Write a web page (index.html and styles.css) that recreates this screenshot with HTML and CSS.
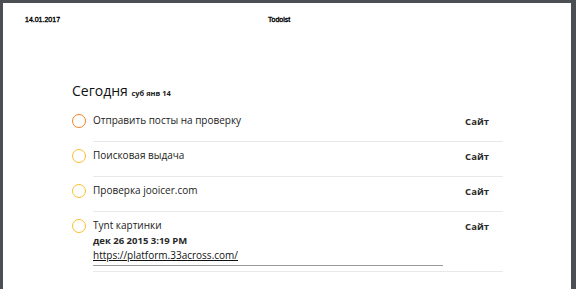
FILE: index.html
```html
<!DOCTYPE html>
<html lang="ru">
<head>
<meta charset="utf-8">
<title>Todoist</title>
<link rel="stylesheet" href="styles.css">
</head>
<body>
<div class="page">
  <header class="print-header">
    <span class="print-date">14.01.2017</span>
    <span class="print-title">Todoist</span>
  </header>
  <main class="content">
    <h1 class="day-title">Сегодня <small class="day-sub">суб янв 14</small></h1>
    <ul class="tasks">
      <li class="task">
        <span class="check check-orange"></span>
        <div class="task-body">
          <div class="task-main"><div class="task-name">Отправить посты на проверку</div></div>
          <span class="task-project">Сайт</span>
        </div>
      </li>
      <li class="task">
        <span class="check check-yellow"></span>
        <div class="task-body">
          <div class="task-main"><div class="task-name">Поисковая выдача</div></div>
          <span class="task-project">Сайт</span>
        </div>
      </li>
      <li class="task">
        <span class="check check-yellow"></span>
        <div class="task-body">
          <div class="task-main"><div class="task-name">Проверка jooicer.com</div></div>
          <span class="task-project">Сайт</span>
        </div>
      </li>
      <li class="task">
        <span class="check check-yellow"></span>
        <div class="task-body task-body-tall">
          <div class="task-main">
            <div class="task-name">Tynt картинки</div>
            <div class="task-date">дек 26 2015 3:19 PM</div>
            <div class="task-link"><a href="#">https://platform.33across.com/</a></div>
          </div>
          <span class="task-project">Сайт</span>
        </div>
      </li>
    </ul>
  </main>
</div>
</body>
</html>
```

FILE: styles.css
```css
html, body {
  margin: 0;
  padding: 0;
  height: 100%;
}
body {
  background: #4b4e52;
  overflow: hidden;
}
.page {
  margin: 3px 0 0 3px;
  width: 568px;
  height: 300px;
  background: #fff;
  font-family: "Open Sans", "Liberation Sans", sans-serif;
  color: #1a1a1a;
}
.print-header {
  display: flex;
  height: 22px;
  box-sizing: border-box;
  padding: 13px 0 0 22px;
  font-family: "Liberation Sans", Arial, sans-serif;
  font-size: 7px;
  line-height: 8px;
  color: #000;
  -webkit-text-stroke: 0.35px #000;
}
.print-date {
  width: 243px;
}
.content {
  padding: 0 0 0 69px;
  width: 431px;
}
.day-title {
  margin: 0;
  padding-top: 55px;
  font-size: 14px;
  font-weight: 400;
  line-height: 22px;
  height: 22px;
  color: #111;
}
.day-sub {
  font-size: 7.5px;
  font-weight: 700;
  color: #222;
}
.tasks {
  list-style: none;
  margin: 0;
  padding: 0;
  padding-top: 5px;
}
.task {
  display: flex;
  align-items: flex-start;
}
.check {
  flex: none;
  box-sizing: border-box;
  width: 14px;
  height: 14px;
  border-radius: 50%;
  border: 1.9px solid #fbbf2e;
  margin: 7px 7px 0 0;
}
.check-orange {
  border-color: #f5862a;
}
.task-body {
  flex: 1;
  display: flex;
  align-items: flex-start;
  border-bottom: 1px solid #e8e8e8;
  padding: 5px 14px 13px 0;
}
.task-body-tall {
  padding-bottom: 5px;
}
.task-main {
  flex: 1;
}
.task-name {
  font-size: 10px;
  line-height: 16px;
  color: #1a1a1a;
}
.task-date {
  font-size: 9.5px;
  font-weight: 700;
  line-height: 15px;
  color: #2a2a2a;
}
.task-link {
  width: 350px;
  border-bottom: 1px solid #999;
  font-size: 10px;
  line-height: 15px;
  padding-bottom: 2px;
}
.task-link a {
  color: #111;
  text-decoration: underline;
}
.task-project {
  flex: none;
  font-size: 9.5px;
  font-weight: 700;
  line-height: 12px;
  padding-top: 4px;
  color: #2a2a2a;
}
```
